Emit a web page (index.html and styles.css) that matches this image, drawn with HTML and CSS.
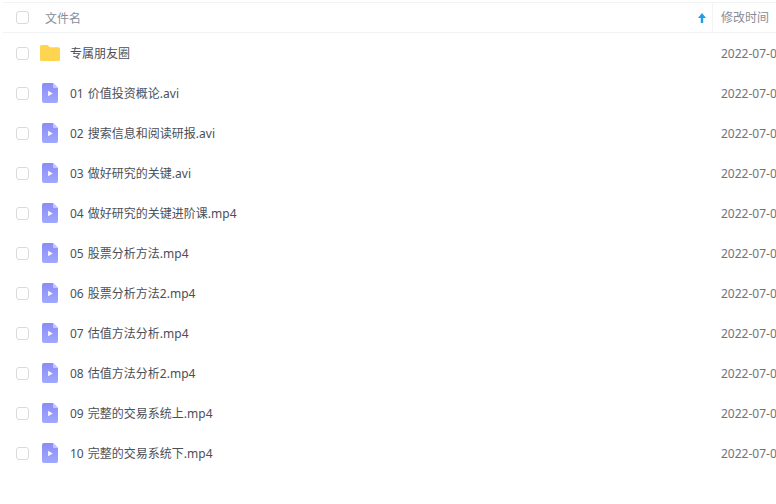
FILE: index.html
```html
<!DOCTYPE html>
<html lang="zh">
<head>
<meta charset="utf-8">
<title>文件列表</title>
<link rel="stylesheet" href="styles.css">
</head>
<body>
<svg class="defs" width="0" height="0" aria-hidden="true">
  <defs>
    <linearGradient id="vid" x1="0" y1="0" x2="0" y2="1">
      <stop offset="0" stop-color="#8a8cf6"/>
      <stop offset="1" stop-color="#a0a8ff"/>
    </linearGradient>
    <symbol id="video" viewBox="0 0 16 20">
      <path d="M2 0H11L16 5V18a2 2 0 0 1-2 2H2a2 2 0 0 1-2-2V2a2 2 0 0 1 2-2Z" fill="url(#vid)"/>
      <path d="M11 0 16 5H12.2A1.2 1.2 0 0 1 11 3.8Z" fill="#c3c6fd"/>
      <path d="M6 7.8 10.8 10.5 6 13.2Z" fill="#f4f5ff"/>
    </symbol>
    <symbol id="folder" viewBox="0 0 20 16">
      <path d="M1.5 0H7.5L10 2.2H18.5A1.5 1.5 0 0 1 20 3.7V14.5A1.5 1.5 0 0 1 18.5 16H1.5A1.5 1.5 0 0 1 0 14.5V1.5A1.5 1.5 0 0 1 1.5 0Z" fill="#ffd451"/>
    </symbol>
  </defs>
</svg>
<main class="list">
  <header class="row head">
    <span class="box"></span>
    <span class="name-head">文件名</span>
    <svg class="sort" viewBox="0 0 8 10" width="8" height="10"><path d="M4 0 8 5H5.2V10H2.8V5H0Z" fill="#1e9fe8"/></svg>
    <span class="time-head">修改时间</span>
  </header>
  <div class="row item"><span class="box"></span><svg class="ico-folder"><use href="#folder"/></svg><span class="name">专属朋友圈</span><span class="time">2022-07-0</span></div>
  <div class="row item"><span class="box"></span><svg class="ico-video"><use href="#video"/></svg><span class="name">01 价值投资概论.avi</span><span class="time">2022-07-0</span></div>
  <div class="row item"><span class="box"></span><svg class="ico-video"><use href="#video"/></svg><span class="name">02 搜索信息和阅读研报.avi</span><span class="time">2022-07-0</span></div>
  <div class="row item"><span class="box"></span><svg class="ico-video"><use href="#video"/></svg><span class="name">03 做好研究的关键.avi</span><span class="time">2022-07-0</span></div>
  <div class="row item"><span class="box"></span><svg class="ico-video"><use href="#video"/></svg><span class="name">04 做好研究的关键进阶课.mp4</span><span class="time">2022-07-0</span></div>
  <div class="row item"><span class="box"></span><svg class="ico-video"><use href="#video"/></svg><span class="name">05 股票分析方法.mp4</span><span class="time">2022-07-0</span></div>
  <div class="row item"><span class="box"></span><svg class="ico-video"><use href="#video"/></svg><span class="name">06 股票分析方法2.mp4</span><span class="time">2022-07-0</span></div>
  <div class="row item"><span class="box"></span><svg class="ico-video"><use href="#video"/></svg><span class="name">07 估值方法分析.mp4</span><span class="time">2022-07-0</span></div>
  <div class="row item"><span class="box"></span><svg class="ico-video"><use href="#video"/></svg><span class="name">08 估值方法分析2.mp4</span><span class="time">2022-07-0</span></div>
  <div class="row item"><span class="box"></span><svg class="ico-video"><use href="#video"/></svg><span class="name">09 完整的交易系统上.mp4</span><span class="time">2022-07-0</span></div>
  <div class="row item"><span class="box"></span><svg class="ico-video"><use href="#video"/></svg><span class="name">10 完整的交易系统下.mp4</span><span class="time">2022-07-0</span></div>
</main>
</body>
</html>
```
FILE: styles.css
```css
html, body {
  margin: 0;
  height: 100%;
  overflow: hidden;
  background: #fff;
}
body {
  font-family: "Noto Sans", "Noto Sans CJK SC", sans-serif;
  font-size: 12px;
  color: #4b4f57;
}
.defs {
  display: block;
  height: 0;
}
.list {
  width: 776px;
  padding-top: 2px;
}
.row {
  display: flex;
  align-items: center;
  white-space: nowrap;
  overflow: hidden;
}
.head {
  height: 29px;
  border-top: 1px solid #f2f3f5;
  border-bottom: 1px solid #f2f3f5;
  margin-left: 3px;
  padding-left: 13px;
  color: #888d96;
}
.item {
  height: 40px;
  padding-left: 16px;
}
.box {
  flex: none;
  width: 11px;
  height: 11px;
  border: 1px solid #d8dade;
  border-radius: 3px;
  background: #fff;
}
.name-head {
  margin-left: 16px;
  flex: 1;
}
.sort {
  flex: none;
  margin-right: 6px;
}
.time-head {
  flex: none;
  box-sizing: border-box;
  width: 64px;
  height: 29px;
  line-height: 29px;
  padding-left: 8px;
  border-left: 1px solid #f2f3f5;
}
.ico-folder {
  flex: none;
  width: 20px;
  height: 16px;
  margin-left: 11px;
}
.ico-video {
  flex: none;
  width: 16px;
  height: 20px;
  margin-left: 13px;
  margin-right: 2px;
}
.name {
  margin-left: 10px;
  flex: 1;
  word-spacing: 1px;
}
.time {
  flex: none;
  width: 55px;
  color: #6f737a;
}
```
